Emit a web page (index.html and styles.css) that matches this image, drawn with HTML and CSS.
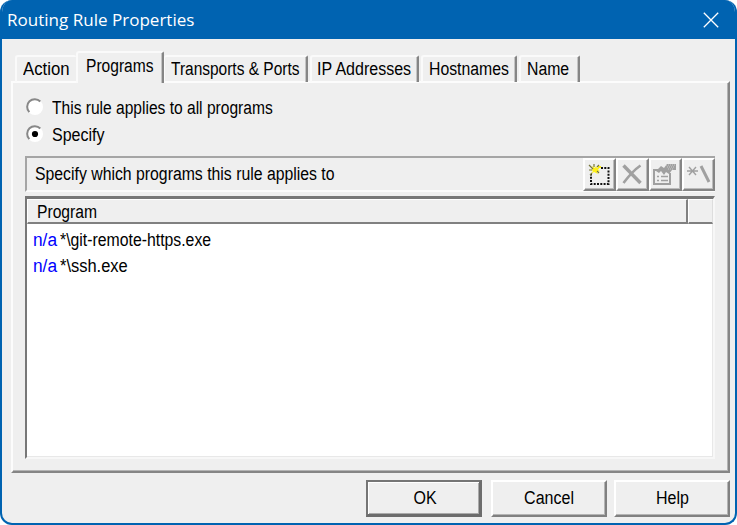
FILE: index.html
```html
<!DOCTYPE html>
<html lang="en">
<head>
<meta charset="utf-8">
<title>Routing Rule Properties</title>
<link rel="stylesheet" href="styles.css">
</head>
<body>
<main class="window">
  <header class="titlebar">
    <h1 class="title">Routing Rule Properties</h1>
    <svg class="close" width="16" height="16" viewBox="0 0 16 16"><path d="M.8.8 15.2 15.2M15.2.8.8 15.2"/></svg>
  </header>
  <nav class="tabs">
    <div class="tab tab-action"><span class="t s93">Action</span></div>
    <div class="tab tab-programs"><span class="t s865">Programs</span></div>
    <div class="tab tab-transports"><span class="t s86">Transports &amp; Ports</span></div>
    <div class="tab tab-ip"><span class="t s89">IP Addresses</span></div>
    <div class="tab tab-hosts"><span class="t s88">Hostnames</span></div>
    <div class="tab tab-name"><span class="t s88">Name</span></div>
  </nav>
  <section class="panel">
    <label class="option">
      <svg class="radio" width="18" height="18" viewBox="0 0 18 18"><circle class="disc" cx="9" cy="9" r="8"/><path class="shade" d="M3.3 14.1A7.3 7.3 0 0 1 14.3 3.5"/></svg>
      <span class="t s865">This rule applies to all programs</span>
    </label>
    <label class="option">
      <svg class="radio" width="18" height="18" viewBox="0 0 18 18"><circle class="disc" cx="9" cy="9" r="8"/><path class="shade" d="M3.3 14.1A7.3 7.3 0 0 1 14.3 3.5"/><circle cx="9" cy="9" r="3.1"/></svg>
      <span class="t s89">Specify</span>
    </label>
    <div class="toolbar">
      <span class="caption"><span class="t s88">Specify which programs this rule applies to</span></span>
      <div class="tool"><svg width="28" height="28" viewBox="0 0 28 28"><path class="dots" d="M16 8h7.500v16H6V14"/><path class="star" d="M7 6l3 2 1-2 1 2 3-1-2 3 2 1-3 1 1 2-4-2-3 2 2-3-2-1 2-1zM13 6h3v2h-3z"/><path class="rays" d="M4 5l4 4M4 10h3M9 4v3M14 5l-2 2M5 15l2-2M14 13l-2-2"/></svg></div>
      <div class="tool"><svg width="28" height="28" viewBox="0 0 28 28"><path class="cross" d="M5.500 5.500l17 17.500"/><path class="cross thin" d="M22.500 5.500C16 10 10 17 5.500 23"/></svg></div>
      <div class="tool"><svg width="28" height="28" viewBox="0 0 28 28"><path class="sheet" d="M7 10H3v14h16V13"/><path class="hand" d="M5 11l5-5 3 2 3-4h9v6h-4l-3 4-3-2-2 3-3-4-2 2z"/><path class="lines" d="M6 16.500h2m2 0h7M6 20.500h2m2 0h7"/><path class="hatch" d="M15 5h9M16 7h8M17 9h6"/></svg></div>
      <div class="tool"><svg width="28" height="28" viewBox="0 0 28 28"><path class="asterisk" d="M3 11h11M5 7l7 8M12 7l-7 8"/><path class="slash" d="M17 6l8 16"/></svg></div>
    </div>
    <div class="list">
      <div class="head">
        <div class="col col-main"><span class="t s87">Program</span></div>
        <div class="col col-rest"></div>
      </div>
      <div class="rows">
        <div class="row"><span class="mark"><span class="t s96">n/a</span></span><span class="t s88">*\git-remote-https.exe</span></div>
        <div class="row"><span class="mark"><span class="t s96">n/a</span></span><span class="t s91">*\ssh.exe</span></div>
      </div>
    </div>
  </section>
  <footer class="actions">
    <button class="btn btn-default"><span class="t s89">OK</span></button>
    <button class="btn"><span class="t s89">Cancel</span></button>
    <button class="btn btn-help"><span class="t s89">Help</span></button>
  </footer>
</main>
</body>
</html>
```
FILE: styles.css
```css
* { box-sizing: border-box; }
body { margin: 0; background: #fff; }
.window {
  width: 737px;
  height: 525px;
  border: 2px solid #0063b1;
  border-top: 0;
  border-radius: 12px;
  background: #efefef;
  overflow: hidden;
  font: 18px/22px "Liberation Sans", Arial, sans-serif;
  color: #000;
}
.titlebar {
  height: 39px;
  display: flex;
  align-items: center;
  justify-content: space-between;
  padding: 0 16px 0 5px;
  background: #0063b1;
  color: #fff;
}
.title {
  margin: 0;
  font: 400 17px/24px "Open Sans", "Noto Sans", sans-serif;
  transform: scaleX(1.002);
  transform-origin: left;
}
.close path { fill: none; stroke: #fff; stroke-width: 1.3; }

/* Condensed dialog lettering */
.t { display: inline-block; white-space: nowrap; transform-origin: left; }
.s86 { transform: scaleX(.86); }
.s865 { transform: scaleX(.865); }
.s87 { transform: scaleX(.87); }
.s88 { transform: scaleX(.878); }
.s89 { transform: scaleX(.89); }
.s91 { transform: scaleX(.915); }
.s93 { transform: scaleX(.93); }
.s96 { transform: scaleX(.96); }

.tabs {
  display: flex;
  align-items: flex-end;
  height: 43px;
  padding-left: 13px;
}
.tab {
  height: 27px;
  padding: 1px 0 0 6px;
  border: solid;
  border-width: 2px 2px 0 2px;
  border-color: #fafafa #858585 transparent #fafafa;
  border-radius: 3px 2px 0 0;
  box-shadow: inset -1px 0 #c4c4c4;
}
.tab-action { width: 61px; border-right: 0; box-shadow: none; }
.tab-programs { position: relative; width: 88px; height: 32px; margin-bottom: -1px; padding: 2px 0 0 8px; background: #efefef; }
.tab-transports { width: 144px; margin-right: 2px; border-left-width: 1px; }
.tab-ip { width: 109px; margin-right: 2px; padding-left: 5px; }
.tab-hosts { width: 96px; margin-right: 2px; }
.tab-name { width: 61px; }

.panel {
  width: 719px;
  height: 392px;
  margin: -1px 0 0 9px;
  padding: 12px 13px 0 12px;
  border: 2px solid;
  border-color: #fcfcfc #858585 #858585 #fcfcfc;
  box-shadow: inset -1px -1px #b4b4b4;
}
.option { display: flex; align-items: center; height: 27px; gap: 8px; padding-left: 1px; }
.option .t { margin-top: -2px; }
.radio { margin-top: -4px; }
.disc { fill: #fff; }
.shade { fill: none; stroke: #888; stroke-width: 2; }

.toolbar {
  display: flex;
  height: 36px;
  margin-top: 7px;
  border: solid;
  border-width: 2px 0 2px 2px;
  border-color: #a5a5a5 #fff #fbfbfb #a5a5a5;
}
.caption { width: 556px; padding: 5px 0 0 8px; }
.tool {
  flex: 0 0 33px;
  height: 33px;
  border: solid;
  border-width: 2px;
  border-color: #fff #858585 #858585 #fff;
  box-shadow: inset -1px -1px #bbb;
}
.tool svg { display: block; fill: none; }
.dots { stroke: #111; stroke-width: 2; stroke-dasharray: 2 1.3; }
.rays { stroke: #77773a; stroke-width: 1.2; }
.star { fill: #fff01a; }
.cross { stroke: #a0a0a0; stroke-width: 3.4; }
.cross.thin { stroke-width: 2.6; }
.sheet { stroke: #a0a0a0; stroke-width: 2; }
.hand { fill: #a0a0a0; }
.lines { stroke: #a0a0a0; stroke-width: 1.6; }
.hatch { stroke: #ccc; stroke-width: 1; stroke-dasharray: 1 1; }
.asterisk { stroke: #a0a0a0; stroke-width: 1.4; }
.slash { stroke: #a0a0a0; stroke-width: 3; }

.list {
  height: 263px;
  margin-top: 4px;
  border: solid;
  border-width: 3px 2px 2px 2px;
  border-color: #777 #f7f7f7 #f7f7f7 #777;
  background: #fff;
  box-shadow: inset -1px -1px #e8e8e8;
}
.head { display: flex; height: 25px; background: #efefef; }
.col {
  border: solid;
  border-width: 1px 2px 2px 1px;
  border-color: #fff #808080 #808080 #fff;
}
.col-main { width: 661px; padding: 1px 0 0 9px; }
.col-rest { flex: 1; border-right: 1px solid #ddd; }
.rows { padding: 3px 0 0 6px; }
.row { display: flex; height: 26px; align-items: center; }
.mark { width: 27px; color: #00f; }

.actions { display: flex; justify-content: flex-end; padding: 7px 5px 0 0; }
.btn {
  width: 116px;
  height: 37px;
  margin-left: 9px;
  padding: 0 0 1px 1px;
  border: solid;
  border-width: 2px;
  border-color: #fff #808080 #808080 #fff;
  box-shadow: inset -1px -1px #b4b4b4;
  background: #efefef;
  font: inherit;
  color: inherit;
}
.btn .t { transform-origin: center; }
.btn-default { padding: 0 0 0 3px; border-width: 2px 3px 3px 2px; border-color: #757575 #6c6c6c #6c6c6c #757575; box-shadow: inset 1px 1px #fff, inset -1px -1px #aaa; }
.btn-help { margin-left: 7px; }
```
